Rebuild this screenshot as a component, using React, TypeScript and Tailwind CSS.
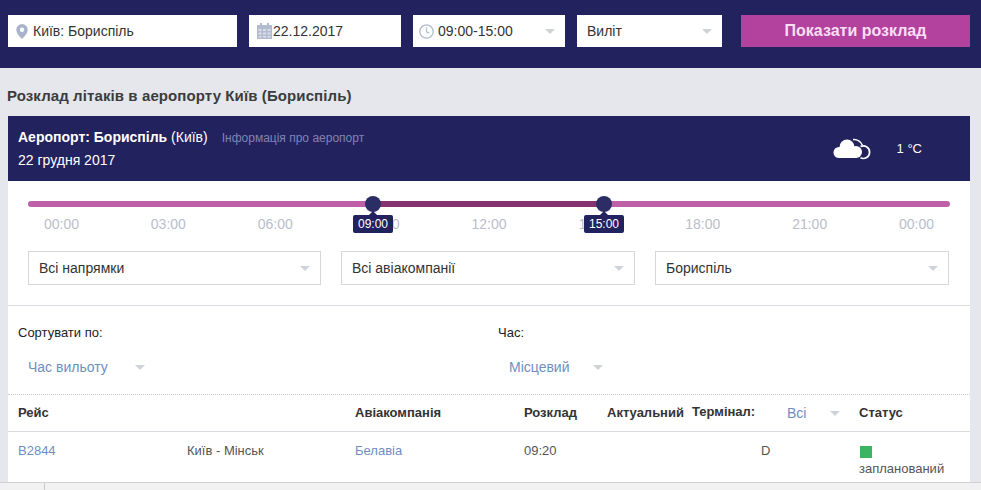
import { ReactNode } from 'react';

const hours = ['00:00', '03:00', '06:00', '09:00', '12:00', '15:00', '18:00', '21:00', '00:00'];

function Caret({ className = '' }: { className?: string }) {
  return (
    <svg className={className} width="10" height="5" viewBox="0 0 10 5">
      <path d="M0 0h10L5 5z" fill="#d0d3da" />
    </svg>
  );
}

function PinIcon() {
  return (
    <svg width="12" height="15" viewBox="0 0 12 15" className="shrink-0">
      <path
        fillRule="evenodd"
        d="M6 0a5.7 5.7 0 0 1 5.7 5.7C11.700 9.200 8 13 6 15 4 13 .3 9.200.3 5.700A5.700 5.700 0 0 1 6 0zm0 3.500a2.200 2.200 0 1 0 0 4.400 2.200 2.200 0 0 0 0-4.400z"
        fill="#a9b4cc"
      />
    </svg>
  );
}

function CalendarIcon() {
  return (
    <svg width="15" height="16" viewBox="0 0 15 16" className="shrink-0">
      <path d="M0 2h15v14H0z" fill="#b3bbcf" />
      <path d="M3 0h2v3H3zM10 0h2v3h-2z" fill="#b3bbcf" />
      <path
        d="M1.500 6h3v2h-3zM6 6h3v2H6zM10.500 6h3v2h-3zM1.500 9.500h3v2h-3zM6 9.500h3v2H6zM10.500 9.500h3v2h-3zM1.500 13h3v1.500h-3zM6 13h3v1.500H6zM10.500 13h3v1.500h-3z"
        fill="#d9deea"
      />
    </svg>
  );
}

function ClockIcon() {
  return (
    <svg width="15" height="15" viewBox="0 0 15 15" fill="none" className="shrink-0">
      <circle cx="7.500" cy="7.500" r="6.700" stroke="#b3bbcf" strokeWidth="1.300" />
      <path d="M7.500 3.500v4.300l2.800 1.500" stroke="#b3bbcf" strokeWidth="1.200" />
    </svg>
  );
}

function CloudIcon() {
  return (
    <svg width="40" height="22" viewBox="0 0 40 22" fill="none">
      <path d="M20 1.500a9 9 0 0 1 9.500 6" stroke="#fff" strokeWidth="1.500" />
      <path d="M27.500 8.500A6.300 6.300 0 1 1 27.500 19.800" stroke="#fff" strokeWidth="1.700" />
      <circle cx="6" cy="14.500" r="5.500" fill="#fff" />
      <circle cx="14" cy="9" r="7.500" fill="#fff" />
      <circle cx="23" cy="14" r="6" fill="#fff" />
      <path d="M6 12h18v8H6z" fill="#fff" />
    </svg>
  );
}

function TopField({ width, icon, children, caret }: { width: string; icon?: ReactNode; children: ReactNode; caret?: boolean }) {
  return (
    <div className={`${width} h-8 bg-white flex items-center text-[14px] text-[#333]`}>
      {icon}
      <span>{children}</span>
      {caret && <Caret className="ml-auto mr-[10px]" />}
    </div>
  );
}

function Select({ width, label }: { width: string; label: string }) {
  return (
    <div className={`${width} h-[34px] border border-[#d5d7dc] bg-white flex items-center justify-between pl-[10px] pr-[10px] text-[14px] text-[#333]`}>
      <span>{label}</span>
      <Caret />
    </div>
  );
}

function SliderHandle({ time, className }: { time: string; className: string }) {
  return (
    <div className={`absolute top-[-5px] flex flex-col items-center w-[40px] ${className}`}>
      <div className="w-4 h-4 rounded-full bg-[#2d2d66]" />
      <div className="w-0 h-0 border-x-[4px] border-x-transparent border-b-[4px] border-b-[#22225f] mt-[-1px]" />
      <div className="w-10 h-[18px] rounded-[2px] bg-[#22225f] text-white text-[12px] leading-[18px] text-center">{time}</div>
    </div>
  );
}

export default function App() {
  return (
    <div className="h-[490px] overflow-hidden flex flex-col bg-[#e5e7ec] font-['Liberation_Sans',Arial,sans-serif]">
      <div className="h-[68px] shrink-0 bg-[#22225f] flex items-start pt-[15px] pl-2">
        <TopField width="w-[229px]" icon={<span className="ml-2 mr-[5px]"><PinIcon /></span>}>Київ: Бориспіль</TopField>
        <div className="w-3" />
        <TopField width="w-[152px]" icon={<span className="ml-2 mr-px"><CalendarIcon /></span>}>22.12.2017</TopField>
        <div className="w-3" />
        <TopField width="w-[152px]" icon={<span className="ml-[6px] mr-1"><ClockIcon /></span>} caret>09:00-15:00</TopField>
        <div className="w-3" />
        <TopField width="w-[145px] pl-[10px]" caret>Виліт</TopField>
        <button className="ml-[19px] w-[229px] h-8 bg-[#b3429f] text-[#f8dff4] font-bold text-[16px]">Показати розклад</button>
      </div>

      <h1 className="mt-[19px] ml-[7px] h-[18px] leading-[18px] text-[15px] font-bold text-[#3c3c3c] tracking-[0.1px]">
        Розклад літаків в аеропорту Київ (Бориспіль)
      </h1>

      <div className="mt-[11px] ml-2 w-[962px] flex-1 min-h-0 bg-white">
        <div className="h-[65px] bg-[#22225f] flex items-start text-white text-[14px]">
          <div className="pl-[10px] pt-[13px]">
            <div className="leading-[16px]">
              <span className="font-bold">Аеропорт: Бориспіль</span> (Київ)
              <span className="ml-[14px] text-[12px] text-[#8082b4]">Інформація про аеропорт</span>
            </div>
            <div className="mt-[6px] leading-[16px]">22 грудня 2017</div>
          </div>
          <div className="ml-auto mt-[22px] flex items-center">
            <CloudIcon />
            <span className="ml-[24px] mr-[48px] text-[13px]">1 °C</span>
          </div>
        </div>

        <div className="h-[125px] border-b border-[#d9dbe0] px-5 pt-5">
          <div className="relative w-[922px] h-[6px] rounded-full bg-[#bf5fa8]">
            <div className="absolute left-[345px] w-[231px] h-[6px] bg-[#84336f]" />
            <SliderHandle time="09:00" className="left-[325px]" />
            <SliderHandle time="15:00" className="left-[556px]" />
          </div>
          <div className="flex mt-[8px] ml-[-20px] text-[14px] leading-[18px] text-[#b9bec9]">
            {hours.map((h, i) => (
              <span key={i} className="w-[106.9px] shrink-0 text-center">{h}</span>
            ))}
          </div>
          <div className="flex mt-[18px]">
            <Select width="w-[293px]" label="Всі напрямки" />
            <div className="w-5" />
            <Select width="w-[294px]" label="Всі авіакомпанії" />
            <div className="w-5" />
            <Select width="w-[294px]" label="Бориспіль" />
          </div>
        </div>

        <div className="h-[89px] border-b border-dotted border-[#c9ccd2] pl-[10px] text-[13px] text-[#222]">
          <div className="flex pt-5 leading-[14px]">
            <div className="w-[480px]">Сортувати по:</div>
            <div>Час:</div>
          </div>
          <div className="flex mt-[18px] text-[14px] leading-[18px] text-[#6d8fc2]">
            <div className="w-[480px] flex items-center pl-[10px]">
              <span>Час вильоту</span>
              <Caret className="ml-[27px]" />
            </div>
            <div className="flex items-center pl-[11px]">
              <span>Місцевий</span>
              <Caret className="ml-[23px]" />
            </div>
          </div>
        </div>

        <div className="h-[37px] border-b border-[#d9dbe0] flex items-center text-[13px] font-bold text-[#333]">
          <span className="ml-[10px] w-[337px]">Рейс</span>
          <span className="w-[169px]">Авіакомпанія</span>
          <span className="w-[83px]">Розклад</span>
          <span className="w-[85px]">Актуальний</span>
          <span className="w-[95px] mb-[2px]">Термінал:</span>
          <span className="w-[43px] flex font-normal text-[14px] text-[#6d8fc2]">Всі</span>
          <Caret className="mr-[19px]" />
          <span>Статус</span>
        </div>

        <div className="flex text-[13px] text-[#555] pt-[11px] h-[50px] leading-[16px]">
          <span className="ml-[10px] w-[169px] text-[#6d8fc2]">B2844</span>
          <span className="w-[168px]">Київ - Мінськ</span>
          <span className="w-[169px] text-[#6d8fc2]">Белавіа</span>
          <span className="w-[237px]">09:20</span>
          <span className="w-[98px]">D</span>
          <div className="flex flex-col">
            <span className="w-3 h-3 mt-[3px] ml-px bg-[#3cb563]" />
            <span className="mt-[3px]">запланований</span>
          </div>
        </div>
      </div>

      <div className="h-[8px] shrink-0 border-t border-[#d0d1d4] bg-[#f1f1f1] pl-[44px]">
        <div className="w-px h-full bg-[#c9c9c9]" />
      </div>
    </div>
  );
}
